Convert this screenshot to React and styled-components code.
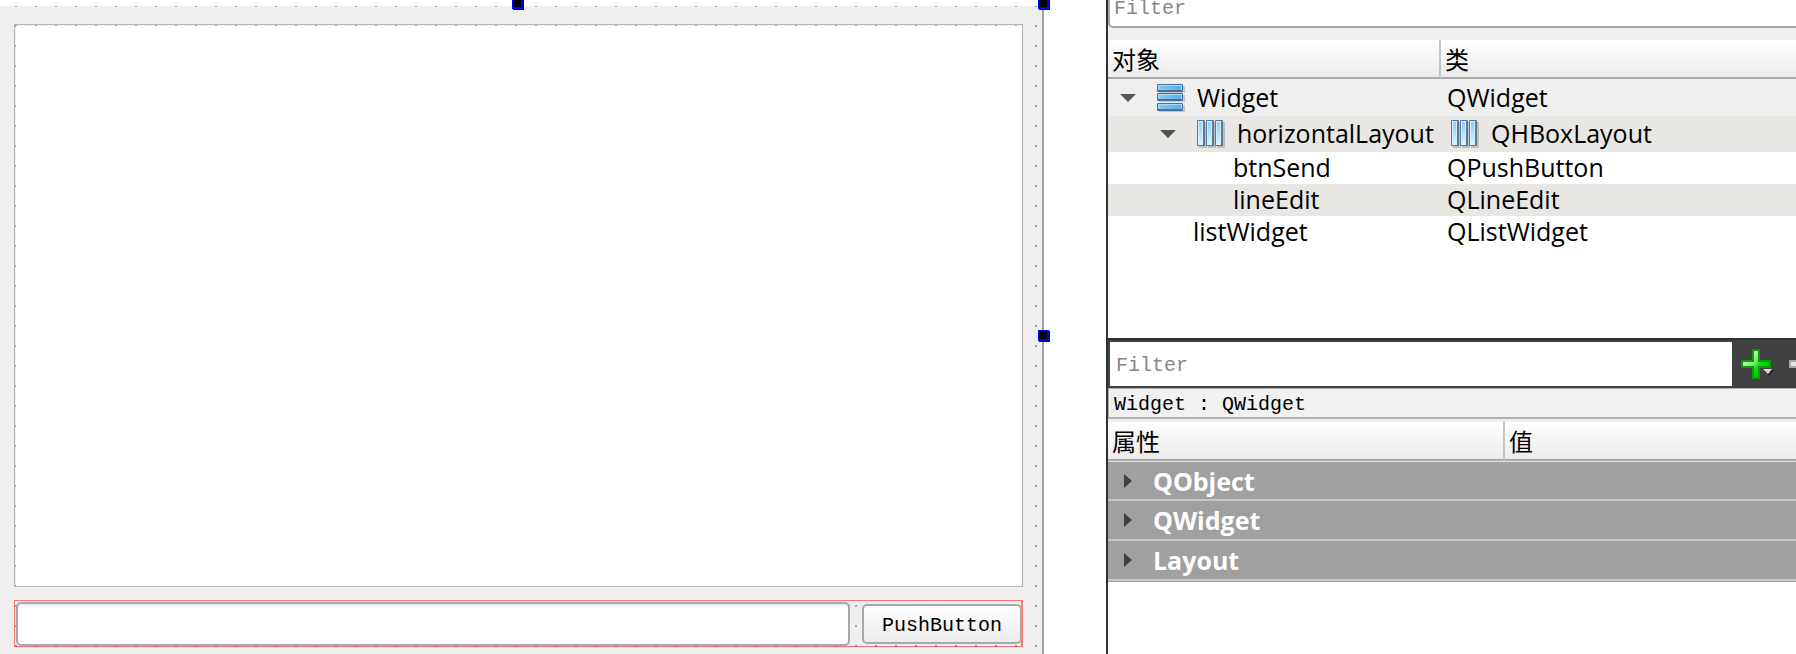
import React from "react";
import styled, { createGlobalStyle } from "styled-components";

const uiFont = '"Open Sans", "Noto Sans CJK SC", sans-serif';
const monoFont = '"Liberation Mono", "Noto Sans CJK SC", monospace';

const GlobalStyle = createGlobalStyle`
  *, *::before, *::after { box-sizing: border-box; }
  body { margin: 0; background: #fff; color: #000; font-family: ${uiFont}; overflow-x: hidden; }
  button, input { font: inherit; color: inherit; }
`;

const Page = styled.main`
  display: grid;
  grid-template-columns: 1106fr 690fr;
  min-height: 100vh;
  overflow: hidden;
`;

const Canvas = styled.section`
  display: flex;
  min-width: 0;
  padding: 6px 62px 0 0;
`;

const Form = styled.div`
  position: relative;
  flex: 1;
  display: flex;
  flex-direction: column;
  gap: 13px;
  min-width: 0;
  padding: 18px 19px 7px 14px;
  border-right: 2px solid #a0a0a0;
  background: conic-gradient(from 270deg at 2px 2px, #a0a0a0 90deg, transparent 0) 15px -1px / 20px 20px #efefef;
`;

const ListWidget = styled.div`
  flex: 1;
  min-height: 200px;
  padding: 1px 0 0 1px;
  border: 1px solid #b4b4b4;
  background: #fff content-box;
`;

const HorizontalLayout = styled.div`
  display: flex;
  align-items: center;
  gap: 12px;
  padding: 1px 0 0 1px;
  border: 1px solid rgba(255, 0, 0, 0.5);
  border-right-width: 2px;
`;

const LineEdit = styled.input`
  flex: 1;
  min-width: 0;
  height: 44px;
  padding: 0 8px;
  border: 2px solid #a8a8a8;
  border-radius: 5px;
  background: #fff;
  box-shadow: inset 0 2px 0 #efefef;
  font: 20px ${monoFont};
  outline: 0;
`;

const PushButton = styled.button`
  height: 40px;
  margin-right: -1px;
  padding: 2px 18px 0;
  border: 2px solid #a8a8a8;
  border-radius: 5px;
  background: linear-gradient(#fff, #ececec);
  font: 20px ${monoFont};
`;

const Handle = styled.span`
  position: absolute;
  left: ${(p) => p.$left};
  top: ${(p) => p.$top};
  width: 11px;
  height: 11px;
  border: solid #00f;
  border-width: 1px 2px 2px 1px;
  background: #000;
  box-shadow: 1px 1px 0 #000;
`;

const Dock = styled.aside`
  display: flex;
  flex-direction: column;
  min-width: 0;
  border-left: 2px solid #2f3133;
  overflow: hidden;
`;

const Inspector = styled.section`
  padding-bottom: 90px;
  border-bottom: 2px solid #2f3133;
`;

const TopSearch = styled.div`
  padding-bottom: 12px;
  background: #efefef;
`;

const TopFilter = styled.input`
  display: block;
  width: calc(100% + 4px);
  height: 40px;
  margin-top: -12px;
  padding: 0 4px;
  border: 2px solid #a8a8a8;
  border-radius: 5px;
  background: #fff;
  font: 20px ${monoFont};
  outline: 0;
  &::placeholder { color: #868686; opacity: 1; }
`;

const Table = styled.table`
  width: 100%;
  table-layout: fixed;
  border-collapse: separate;
  border-spacing: 0;
  font-size: 25px;
  line-height: 32px;
`;

const HeadCell = styled.th`
  width: ${(p) => p.$width || "auto"};
  height: ${(p) => p.$height || 39}px;
  padding: 2px 4px 0;
  border-bottom: 2px solid #a8a8a8;
  border-right: ${(p) => (p.$width ? "2px solid #c6c6c6" : "0")};
  background: linear-gradient(#fff, #ebebeb);
  font-size: 24px;
  font-weight: 400;
  text-align: left;
`;

const rowColors = { selected: "#efefef", odd: "#e8e7e3", even: "#fff" };

const TreeRow = styled.tr`
  height: ${(p) => p.$height}px;
  background: ${(p) => rowColors[p.$tone]};
`;

const TreeCell = styled.td`
  padding: 0 0 0 ${(p) => p.$inset}px;
`;

const CellContent = styled.div`
  display: flex;
  align-items: center;
  gap: 12px;
  height: 32px;
  white-space: nowrap;
`;

const CellText = styled.span`
  line-height: 30px;
  padding-bottom: 2px;
`;

const Toggle = styled.button`
  display: flex;
  flex: none;
  align-items: center;
  justify-content: center;
  width: 30px;
  height: 24px;
  margin-right: -2px;
  padding: 0;
  border: 0;
  background: none;
`;

const FilterBar = styled.div`
  display: flex;
  height: 48px;
  padding: 2px 0 2px 2px;
  background: #404142;
`;

const PropertyFilter = styled.input`
  flex: 1;
  min-width: 0;
  height: 44px;
  padding: 2px 6px 0;
  border: 0;
  background: #fff;
  font: 20px ${monoFont};
  outline: 0;
  &::placeholder { color: #868686; opacity: 1; }
`;

const Tools = styled.div`
  display: flex;
  flex: none;
  align-items: center;
  gap: 15px;
  width: 64px;
  padding-left: 8px;
  overflow: hidden;
`;

const ToolButton = styled.button`
  display: flex;
  flex: none;
  padding: 0;
  border: 0;
  background: none;
`;

const ObjectLabel = styled.div`
  height: 31px;
  padding: 2px 5px 0;
  border: 1px solid #b0b0b0;
  border-width: 1px 0 2px 1px;
  background: #f1f1f1;
  font: 20px/28px ${monoFont};
`;

const Properties = styled.section`
  padding-top: 3px;
  background: #efefef;
`;

const GroupCell = styled.td`
  height: 40px;
  padding: 0;
  border-top: ${(p) => (p.$first ? "1px solid #e4e4e4" : "0")};
  border-bottom: 2px solid #c6c6c6;
  background: #a0a0a0;
  color: #fff;
  font-weight: 700;
`;

const GroupContent = styled.div`
  display: flex;
  align-items: center;
  gap: 12px;
  height: 32px;
  padding-left: 5px;
`;

const GroupEnd = styled.div`
  height: 1px;
  background: #a0a0a0;
`;

const Rest = styled.div`
  flex: 1;
  background: #fff;
`;

function DownArrow() {
  return (
    <svg width="16" height="8" viewBox="0 0 16 8" aria-hidden="true">
      <path d="M0 0H16L8 8Z" fill="#555553" />
    </svg>
  );
}

function RightArrow() {
  return (
    <svg width="8" height="14" viewBox="0 0 8 14" aria-hidden="true">
      <path d="M0 0L8 7L0 14Z" fill="#404040" />
    </svg>
  );
}

function HBoxIcon() {
  return (
    <svg width="32" height="30" viewBox="0 0 32 30" aria-hidden="true">
      <defs>
        <linearGradient id="hbox-bar" x1="0" y1="0" x2="0" y2="1">
          <stop offset="0" stopColor="#85d0fb" />
          <stop offset="1" stopColor="#d9f3ff" />
        </linearGradient>
      </defs>
      {[4, 13, 22].map((x) => (
        <g key={x}>
          <rect x={x + 2} y="3" width="8" height="26" fill="#77777a" opacity="0.35" />
          <rect x={x} y="1" width="8" height="26" rx="1" fill="#5f7797" />
          <rect x={x + 1} y="2" width="5" height="24" fill="#d7f0fd" />
          <rect x={x + 2} y="3" width="3" height="22" fill="url(#hbox-bar)" />
        </g>
      ))}
    </svg>
  );
}

function VBoxIcon() {
  return (
    <svg width="32" height="30" viewBox="0 0 32 30" aria-hidden="true">
      <defs>
        <linearGradient id="vbox-bar" x1="0" y1="0" x2="1" y2="0">
          <stop offset="0" stopColor="#86c8f3" />
          <stop offset="1" stopColor="#5fb0ea" />
        </linearGradient>
      </defs>
      {[1, 10, 20].map((y) => (
        <g key={y}>
          <rect x="6" y={y + 2} width="26" height="7" fill="#77777a" opacity="0.35" />
          <rect x="4" y={y} width="26" height="8" rx="1" fill="#44719f" />
          <rect x="5" y={y + 1} width="24" height="5" fill="#a6dbfa" />
          <rect x="6" y={y + 2} width="22" height="4" fill="url(#vbox-bar)" />
        </g>
      ))}
    </svg>
  );
}

function AddIcon() {
  return (
    <svg width="34" height="32" viewBox="0 0 34 32" aria-hidden="true">
      <defs>
        <linearGradient id="add-fill" x1="0" y1="0" x2="1" y2="1">
          <stop offset="0.15" stopColor="#d8f8cc" />
          <stop offset="0.45" stopColor="#7fe868" />
          <stop offset="0.58" stopColor="#00e000" />
          <stop offset="1" stopColor="#00c000" />
        </linearGradient>
      </defs>
      <path d="M13 2H19V13H30V19H19V30H13V19H2V13H13Z" fill="url(#add-fill)" stroke="#0b9b0b" strokeWidth="2" />
      <path d="M24 22H34L29 28Z" fill="#222" />
      <path d="M23 21H32L28 26Z" fill="#ddd" />
    </svg>
  );
}

function RemoveIcon() {
  return (
    <svg width="30" height="32" viewBox="0 0 30 32" aria-hidden="true">
      <rect x="0" y="12" width="30" height="8" fill="#a8a8a8" />
      <rect x="2" y="14" width="26" height="4" fill="#e4e4e4" />
    </svg>
  );
}

const objects = [
  { name: "Widget", type: "QWidget", depth: 0, open: true, icon: VBoxIcon, height: 37, tone: "selected" },
  { name: "horizontalLayout", type: "QHBoxLayout", depth: 1, open: true, icon: HBoxIcon, typeIcon: HBoxIcon, height: 36, tone: "odd" },
  { name: "btnSend", type: "QPushButton", depth: 2, height: 32, tone: "even" },
  { name: "lineEdit", type: "QLineEdit", depth: 2, height: 32, tone: "odd" },
  { name: "listWidget", type: "QListWidget", depth: 1, height: 32, tone: "even" },
];

const groups = ["QObject", "QWidget", "Layout"];

function ObjectRow({ item }) {
  const Icon = item.icon;
  const TypeIcon = item.typeIcon;
  return (
    <TreeRow $height={item.height} $tone={item.tone}>
      <TreeCell $inset={5 + item.depth * 40 + (item.open ? 0 : 40)}>
        <CellContent>
          {item.open && (
            <Toggle type="button" aria-expanded="true" aria-label={item.name}>
              <DownArrow />
            </Toggle>
          )}
          {Icon && <Icon />}
          <CellText>{item.name}</CellText>
        </CellContent>
      </TreeCell>
      <TreeCell $inset={6}>
        <CellContent>
          {TypeIcon && <TypeIcon />}
          <CellText>{item.type}</CellText>
        </CellContent>
      </TreeCell>
    </TreeRow>
  );
}

export default function App() {
  return (
    <>
      <GlobalStyle />
      <Page>
        <Canvas>
          <Form>
            <ListWidget role="listbox" aria-label="listWidget" />
            <HorizontalLayout>
              <LineEdit type="text" aria-label="lineEdit" />
              <PushButton type="button">PushButton</PushButton>
            </HorizontalLayout>
            <Handle $left="calc(50% - 9px)" $top="-8px" />
            <Handle $left="calc(100% - 4px)" $top="-8px" />
            <Handle $left="calc(100% - 4px)" $top="50%" />
          </Form>
        </Canvas>
        <Dock>
          <Inspector>
            <TopSearch>
              <TopFilter type="text" placeholder="Filter" aria-label="Filter" />
            </TopSearch>
            <Table>
              <thead>
                <tr>
                  <HeadCell $width="333px">对象</HeadCell>
                  <HeadCell>类</HeadCell>
                </tr>
              </thead>
              <tbody>
                {objects.map((item) => (
                  <ObjectRow key={item.name} item={item} />
                ))}
              </tbody>
            </Table>
          </Inspector>
          <FilterBar>
            <PropertyFilter type="text" placeholder="Filter" aria-label="Filter" />
            <Tools>
              <ToolButton type="button" aria-label="Add">
                <AddIcon />
              </ToolButton>
              <ToolButton type="button" aria-label="Remove">
                <RemoveIcon />
              </ToolButton>
            </Tools>
          </FilterBar>
          <ObjectLabel>Widget : QWidget</ObjectLabel>
          <Properties>
            <Table>
              <thead>
                <tr>
                  <HeadCell $width="397px">属性</HeadCell>
                  <HeadCell>值</HeadCell>
                </tr>
              </thead>
              <tbody>
                {groups.map((name, index) => (
                  <tr key={name}>
                    <GroupCell colSpan={2} $first={index === 0}>
                      <GroupContent>
                        <Toggle type="button" aria-expanded="false" aria-label={name}>
                          <RightArrow />
                        </Toggle>
                        <span>{name}</span>
                      </GroupContent>
                    </GroupCell>
                  </tr>
                ))}
              </tbody>
            </Table>
            <GroupEnd />
          </Properties>
          <Rest />
        </Dock>
      </Page>
    </>
  );
}
